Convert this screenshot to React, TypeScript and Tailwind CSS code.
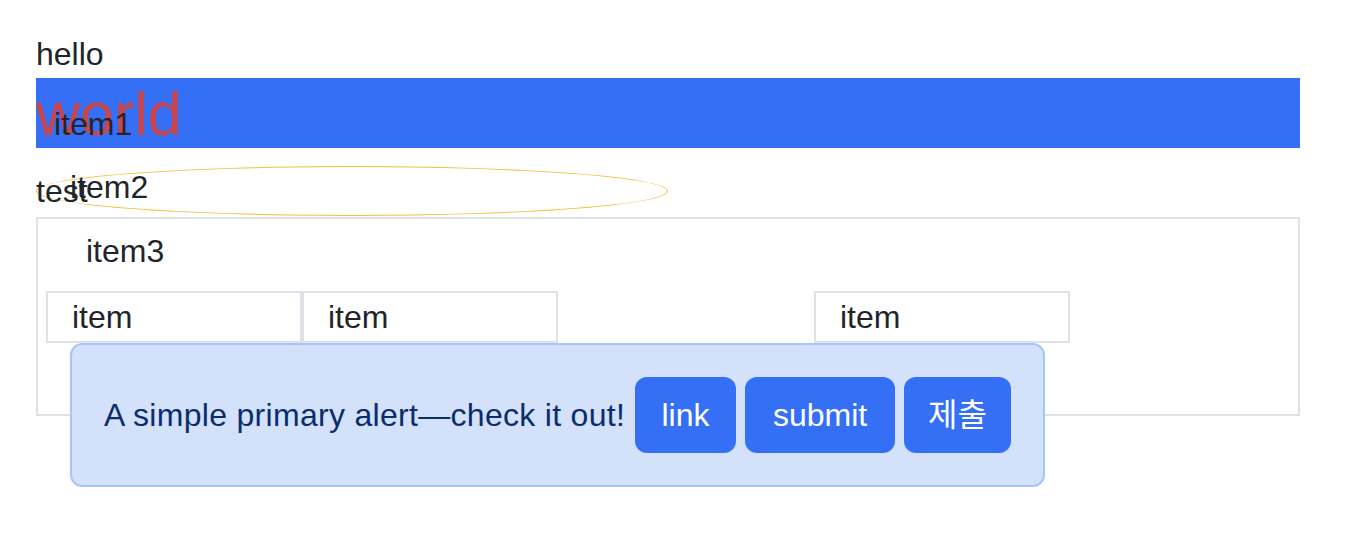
export default function App() {
  const items = ["item", "item", "item", "item"];

  return (
    <div className="min-h-screen bg-white px-[36px] pt-[30px] text-[32px] leading-[48px] text-[#212529] font-['Liberation_Sans','Noto_Sans_CJK_KR',sans-serif]">
      <div>hello</div>

      {/* blue bar */}
      <div className="relative h-[70px] w-[1264px] bg-[#346ff5]">
        <span className="block text-[61px] leading-[72px] text-[#c8454b]">world</span>
        <span className="absolute left-[18px] top-[22px]">item1</span>
      </div>

      {/* ellipse row */}
      <div className="relative mt-[18px] h-[50px] w-[632px] pt-[1px]">
        <div className="absolute inset-0 rounded-[50%] border-[1.5px] border-[#f4bf3a]" />
        <div className="relative">test</div>
        <span className="absolute left-[34px] top-[-3px]">item2</span>
      </div>

      {/* bordered box */}
      <div className="relative mt-[1px] h-[199px] w-[1264px] border-2 border-[#dee2e6] p-[8px]">
        <div className="ml-[40px]">item3</div>
        <div className="mt-[16px] flex">
          {items.map((t, i) => (
            <div
              key={i}
              className={
                i === 2
                  ? "invisible h-[52px] w-[256px] border-2 border-[#dee2e6] px-[24px]"
                  : "h-[52px] w-[256px] border-2 border-[#dee2e6] px-[24px]"
              }
            >
              {t}
            </div>
          ))}
        </div>

        {/* alert */}
        <div className="absolute left-[32px] top-[124px] flex w-[975px] items-center rounded-[12px] border-2 border-[#a7c5f9] bg-[#d3e1fb] p-[32px] text-[#0b2d6b]">
          <span className="w-[531px] whitespace-nowrap tracking-[0.3px]">A simple primary alert—check it out!</span>
          <div className="flex gap-[9px] text-white">
            <button className="h-[76px] w-[101px] rounded-[12px] bg-[#346ff5]">link</button>
            <button className="h-[76px] w-[150px] rounded-[12px] bg-[#346ff5]">submit</button>
            <button className="h-[76px] w-[107px] rounded-[12px] bg-[#346ff5]">제출</button>
          </div>
        </div>
      </div>
    </div>
  );
}
